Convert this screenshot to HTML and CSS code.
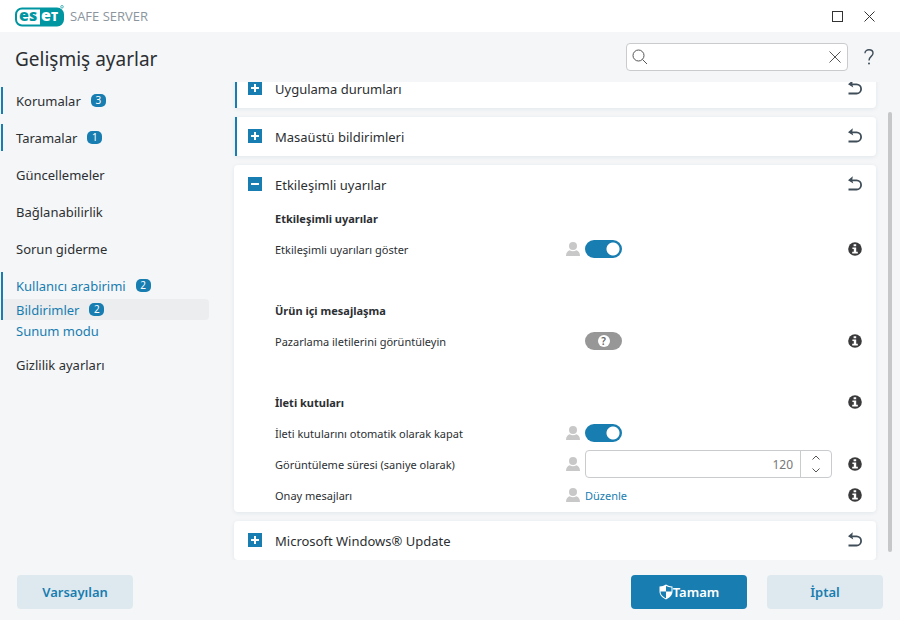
FILE: index.html
```html
<!DOCTYPE html>
<html lang="tr">
<head>
<meta charset="utf-8">
<title>ESET Safe Server</title>
<link rel="stylesheet" href="styles.css">
</head>
<body>
<svg class="defs" aria-hidden="true">
  <symbol id="undo" viewBox="0 0 14 15"><path d="M.5 13.500h8a4.600 4.600 0 0 0 0-9.200H3" fill="none" stroke="currentColor" stroke-width="1.800"/><path d="M0 4.300 4.800.2 4.200 4.300 5.300 7.500z" fill="currentColor"/></symbol>
  <symbol id="info" viewBox="0 0 14 14"><circle cx="7" cy="7" r="6.800" fill="#3a3a3c"/><path d="M5.600 2.300h2.600v2H5.600zM4.400 5.400h3.800v4.400h1.600v1.600H4.200V9.800h1.600V7H4.400z" fill="#fff"/></symbol>
  <symbol id="user" viewBox="0 0 14 14"><circle cx="7" cy="4" r="4" fill="#c8c8c8"/><path d="M0 14c0-3 1.500-5.200 3.600-5.700C5.500 9.500 8.500 9.500 10.400 8.300 12.500 8.800 14 11 14 14z" fill="#c8c8c8"/></symbol>
</svg>
<div class="window">
  <header class="titlebar">
    <svg class="logo" viewBox="0 0 50 22" role="img" aria-label="eset">
      <rect x="1" y="3.500" width="47" height="17" rx="6" fill="#fff" stroke="#0096a1" stroke-width="2"/>
      <path d="M25 3.500h17a6 6 0 0 1 6 6v5a6 6 0 0 1-6 6H25z" fill="#0096a1"/>
      <text class="logo-text" x="4" y="16" fill="#0096a1">es</text>
      <text class="logo-text" x="26" y="16" fill="#fff">e<tspan class="logo-cap">T</tspan></text>
      <circle cx="47" cy="1.800" r="1.300" fill="none" stroke="#0096a1" stroke-width=".7"/>
    </svg>
    <span class="product">SAFE SERVER</span>
    <button class="win-btn" aria-label="Ekranı kapla"><svg width="11" height="11" viewBox="0 0 11 11"><rect x=".5" y=".5" width="10" height="10" fill="none" stroke="#333"/></svg></button>
    <button class="win-btn" aria-label="Kapat"><svg width="11" height="11" viewBox="0 0 11 11"><path d="m.5.5 10 10m0-10-10 10" stroke="#333"/></svg></button>
  </header>
  <div class="page-head">
    <h1>Gelişmiş ayarlar</h1>
    <div class="search">
      <svg width="16" height="16" viewBox="0 0 16 16"><circle cx="6.500" cy="6.500" r="5.500" fill="none" stroke="#555"/><path d="m10.500 10.500 4.500 4.500" stroke="#555"/></svg>
      <input type="text" aria-label="Ara">
      <button aria-label="Temizle"><svg width="12" height="12" viewBox="0 0 12 12"><path d="m.5.5 11 11m0-11-11 11" stroke="#555"/></svg></button>
    </div>
    <button class="help" aria-label="Yardım"><svg width="10" height="16" viewBox="0 0 10 16"><path d="M1 4.200C1 2 2.700.8 5 .8s4 1.200 4 3.400C9 7.500 5 7.300 5 11.500" fill="none" stroke="#3f4d59" stroke-width="1.400"/><circle cx="5" cy="14.600" r="1" fill="#3f4d59"/></svg></button>
  </div>
  <div class="body">
    <nav class="sidebar">
      <div class="group marked"><a href="#" class="item">Korumalar <span class="badge">3</span></a></div>
      <div class="group marked"><a href="#" class="item">Taramalar <span class="badge">1</span></a></div>
      <div class="group"><a href="#" class="item">Güncellemeler</a></div>
      <div class="group"><a href="#" class="item">Bağlanabilirlik</a></div>
      <div class="group"><a href="#" class="item">Sorun giderme</a></div>
      <div class="open">
        <div class="group marked">
          <a href="#" class="item">Kullanıcı arabirimi <span class="badge">2</span></a>
          <a href="#" class="item sub current">Bildirimler <span class="badge">2</span></a>
        </div>
        <div class="group"><a href="#" class="item sub">Sunum modu</a></div>
      </div>
      <div class="group"><a href="#" class="item">Gizlilik ayarları</a></div>
    </nav>
    <main class="content">
      <section class="card changed">
        <div class="card-head"><button class="toggle plus" aria-label="Genişlet"></button><h2>Uygulama durumları</h2><button class="undo" aria-label="Geri al"><svg><use href="#undo"/></svg></button></div>
      </section>
      <section class="card changed">
        <div class="card-head"><button class="toggle plus" aria-label="Genişlet"></button><h2>Masaüstü bildirimleri</h2><button class="undo" aria-label="Geri al"><svg><use href="#undo"/></svg></button></div>
      </section>
      <section class="card">
        <div class="card-head"><button class="toggle" aria-label="Daralt"></button><h2>Etkileşimli uyarılar</h2><button class="undo" aria-label="Geri al"><svg><use href="#undo"/></svg></button></div>
        <div class="settings">
          <div class="set">
            <div class="row"><h3>Etkileşimli uyarılar</h3></div>
            <div class="row"><label for="show">Etkileşimli uyarıları göster</label><svg class="user"><use href="#user"/></svg><div class="control"><input id="show" class="switch" type="checkbox" checked></div><svg class="info"><use href="#info"/></svg></div>
          </div>
          <div class="set">
            <div class="row"><h3>Ürün içi mesajlaşma</h3></div>
            <div class="row"><label for="promo">Pazarlama iletilerini görüntüleyin</label><span class="user"></span><div class="control"><button id="promo" class="unset"><span>?</span></button></div><svg class="info"><use href="#info"/></svg></div>
          </div>
          <div class="set">
            <div class="row"><h3>İleti kutuları</h3><span class="user"></span><span class="control"></span><svg class="info"><use href="#info"/></svg></div>
            <div class="row"><label for="auto">İleti kutularını otomatik olarak kapat</label><svg class="user"><use href="#user"/></svg><div class="control"><input id="auto" class="switch" type="checkbox" checked></div></div>
            <div class="row"><label for="secs">Görüntüleme süresi (saniye olarak)</label><svg class="user"><use href="#user"/></svg>
              <div class="control"><div class="spinner"><input id="secs" type="text" value="120"><div class="steps"><button aria-label="Artır"><svg width="8" height="5" viewBox="0 0 8 5"><path d="m.5 4.500 3.500-3.500 3.500 3.500" fill="none" stroke="#555"/></svg></button><button aria-label="Azalt"><svg width="8" height="5" viewBox="0 0 8 5"><path d="m.5.5 3.500 3.500L7.500.5" fill="none" stroke="#555"/></svg></button></div></div></div>
              <svg class="info"><use href="#info"/></svg></div>
            <div class="row"><span class="label">Onay mesajları</span><svg class="user"><use href="#user"/></svg><div class="control"><a href="#">Düzenle</a></div><svg class="info"><use href="#info"/></svg></div>
          </div>
        </div>
      </section>
      <section class="card">
        <div class="card-head"><button class="toggle plus" aria-label="Genişlet"></button><h2>Microsoft Windows® Update</h2><button class="undo" aria-label="Geri al"><svg><use href="#undo"/></svg></button></div>
      </section>
    </main>
    <div class="scroll"><div class="thumb"></div></div>
  </div>
  <footer class="actions">
    <button class="btn">Varsayılan</button>
    <button class="btn primary"><svg width="14" height="16" viewBox="0 0 14 16"><path d="M7 .5c2 1.300 4 1.900 6.500 2v5c0 3.500-3 6.500-6.500 8-3.500-1.500-6.500-4.500-6.500-8v-5C3 2.400 5 1.800 7 .5z" fill="#fff"/><path d="M7 2v5.500h5.500V3.400C10.500 3.300 8.700 2.900 7 2zM1.500 7.500H7v6.800C4 13 1.500 10.500 1.500 7.500z" fill="#187db0"/></svg>Tamam</button>
    <button class="btn">İptal</button>
  </footer>
</div>
</body>
</html>
```
FILE: styles.css
```css
* { box-sizing: border-box; }
body {
  margin: 0;
  font-family: "Noto Sans", sans-serif;
  font-size: 13px;
  color: #2c2f32;
  background: #f4f6f8;
}
button { border: 0; padding: 0; background: none; font: inherit; color: inherit; }
h1, h2, h3 { margin: 0; }
a { color: #187db0; text-decoration: none; }
svg { display: block; flex: none; }
.defs { display: none; }
.window { height: 100vh; display: flex; flex-direction: column; }

.titlebar { height: 32px; background: #fff; display: flex; align-items: center; padding: 0 15px; }
.logo { width: 50px; height: 22px; }
.logo-text { font: 800 16px "Open Sans", sans-serif; }
.logo-cap { font-size: 12px; }
.product { margin-left: 5px; margin-right: auto; color: #8b959d; font-family: "Open Sans", sans-serif; font-size: 13px; }
.win-btn { width: 32px; height: 32px; display: flex; align-items: center; justify-content: center; }

.page-head { height: 50px; display: flex; align-items: center; padding: 0 26px 0 15px; flex: none; }
.page-head h1 { font-size: 19px; font-weight: 450; line-height: 26px; margin-top: 4px; margin-right: auto; }
.search { width: 222px; height: 28px; border: 1px solid #c9cbcd; border-radius: 4px; background: #fff; display: flex; align-items: center; padding: 0 6px 0 5px; }
.search input { flex: 1; min-width: 0; border: 0; outline: 0; background: none; font: inherit; }
.help { margin-left: 16px; }

.body { flex: 1; min-height: 0; display: flex; }
.sidebar { width: 230px; padding: 5px 21px 0 1px; display: flex; flex-direction: column; gap: 10px; flex: none; }
.group { border-left: 2px solid transparent; }
.marked { border-color: #187db0; }
.item { display: flex; align-items: center; height: 27px; padding-left: 13px; font-weight: 450; color: #2c2f32; }
.open .item { color: #187db0; }
.sub { height: 21px; }
.current { background: #ebedef; border-radius: 0 4px 4px 0; }
.badge { margin-left: 10px; width: 15px; height: 13px; border-radius: 5px; background: #187db0; color: #fff; font-size: 10px; line-height: 13px; text-align: center; }

.content { flex: 1; min-width: 0; overflow: hidden; display: flex; flex-direction: column; justify-content: flex-end; gap: 9px; padding: 0 4px; }
.card { flex: none; background: #fff; border-radius: 4px; padding-bottom: 1px; box-shadow: 0 1px 4px rgba(40, 60, 80, .08); }
.changed { margin-left: 1px; border-left: 2px solid #187db0; border-radius: 0 4px 4px 0; }
.card-head { height: 38px; display: flex; align-items: center; padding: 0 14px; }
.changed .card-head { padding-left: 11px; }
.card-head h2 { font-size: 13px; font-weight: 450; margin-left: 13px; margin-right: auto; line-height: 14px; margin-top: 2px; }
.toggle { width: 14px; height: 14px; background: linear-gradient(#fff, #fff) center / 8px 2px no-repeat #187db0; }
.plus { background: linear-gradient(#fff, #fff) center / 8px 2px no-repeat, linear-gradient(#fff, #fff) center / 2px 8px no-repeat #187db0; }
.undo { color: #3f4d59; margin-bottom: 1px; }
.undo svg { width: 14px; height: 15px; }

.settings { display: flex; flex-direction: column; gap: 30px; padding: 0 14px 0 41px; }
.row { height: 31px; display: grid; grid-template-columns: 291px 14px 252px 1fr; align-items: center; font-size: 11px; }
.row h3 { font-size: 11px; font-weight: 700; }
.user { width: 14px; height: 14px; margin-bottom: 1px; }
.info { width: 14px; height: 14px; margin-bottom: 1px; justify-self: end; }
.control { margin-left: 5px; margin-bottom: 1px; display: flex; align-items: center; }
.switch { appearance: none; margin: 0; width: 37px; height: 18px; border-radius: 9px; background: radial-gradient(circle at 28px 9px, #fff 6px, #187db0 7px); }
.unset { width: 37px; height: 18px; border-radius: 9px; background: #979797; display: flex; align-items: center; justify-content: center; }
.unset span { width: 12px; height: 12px; border-radius: 6px; background: #fff; color: #666; font-size: 10px; font-weight: 600; line-height: 12px; }
.spinner { flex: 1; height: 28px; display: flex; border: 1px solid #c9cbcd; border-radius: 4px; background: #fff; }
.spinner input { flex: 1; min-width: 0; border: 0; outline: 0; background: none; text-align: right; font: inherit; font-size: 12px; color: #777; padding: 0 7px; }
.steps { width: 31px; border-left: 1px solid #c9cbcd; display: flex; flex-direction: column; justify-content: center; align-items: center; gap: 8px; }

.scroll { width: 20px; flex: none; padding: 30px 8px 8px; }
.thumb { width: 4px; height: 100%; border-radius: 2px; background: #c5c7c9; }

.actions { height: 60px; flex: none; display: flex; align-items: flex-start; gap: 20px; padding: 15px 17px 0; }
.btn { width: 116px; height: 34px; border-radius: 4px; background: #dee9ef; color: #187db0; font-weight: 600; display: flex; align-items: center; justify-content: center; }
.btn:first-child { margin-right: auto; }
.primary { background: #187db0; color: #fff; }
```
